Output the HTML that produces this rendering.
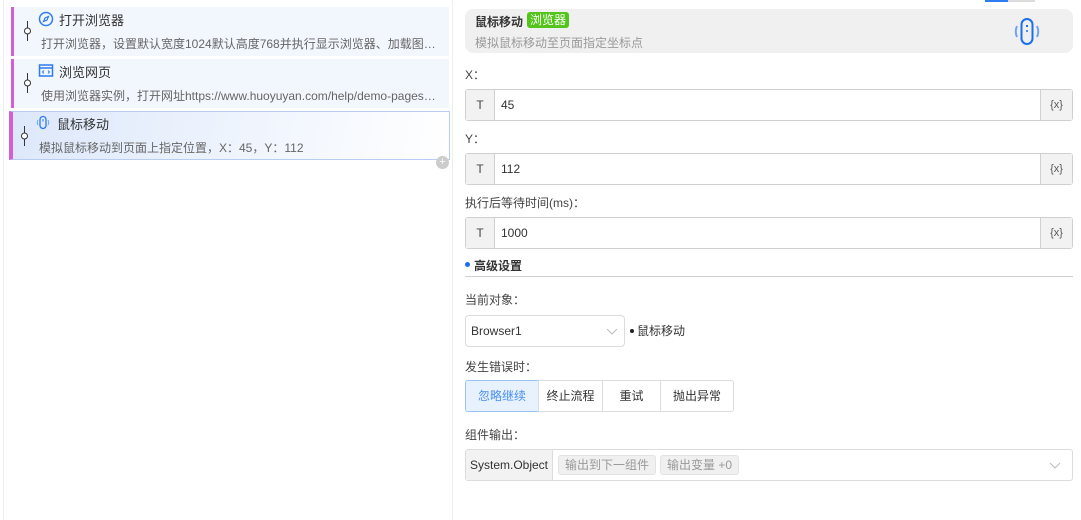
<!DOCTYPE html>
<html><head><meta charset="utf-8"><style>
*{box-sizing:border-box;margin:0;padding:0}
body{width:1081px;height:520px;background:#fff;font-family:"Liberation Sans","Noto Sans CJK SC",sans-serif;position:relative;overflow:hidden;font-size:12px;color:#333}
.a{position:absolute}
.card{position:absolute;left:11px;width:438px;height:49px;background:#f2f6fd;border-left:3px solid #d35ed8}
.card .t{position:absolute;left:45px;top:3px;font-size:13px;color:#333}
.card .d{position:absolute;left:27px;top:28px;font-size:12px;color:#666;white-space:nowrap}
.pin{position:absolute;left:9px;top:14px;width:9px;height:20px}
.ic{position:absolute;left:24px;top:4px;width:16px;height:16px}
.lbl{position:absolute;left:465px;font-size:12px;color:#444}
.inp{position:absolute;left:465px;width:608px;height:32px;border:1px solid #d0d0d0;border-radius:3px;background:#fff}
.inp .T{position:absolute;left:0;top:0;width:29px;height:30px;background:#f2f2f2;border-right:1px solid #d0d0d0;text-align:center;line-height:30px;color:#444}
.inp .v{position:absolute;left:35px;top:0;line-height:30px;color:#333}
.inp .x{position:absolute;right:0;top:0;width:32px;height:30px;background:#f2f2f2;border-left:1px solid #d0d0d0;text-align:center;line-height:30px;color:#555;font-size:11px}
.btn{position:absolute;top:380px;height:32px;border:1px solid #dcdcdc;text-align:center;line-height:30px;font-size:12px;color:#333;background:#fff}
</style></head><body>
<div class="a" style="left:3px;top:0;width:1px;height:520px;background:#eee"></div>
<div class="a" style="left:452px;top:0;width:1px;height:520px;background:#eee"></div>

<div class="card" style="top:7px">
<svg class="pin" viewBox="0 0 9 20"><line x1="4.5" y1="0" x2="4.5" y2="20" stroke="#333"/><circle cx="4.5" cy="10" r="3" fill="#fff" stroke="#333"/></svg>
<svg class="ic" viewBox="0 0 16 16"><circle cx="8" cy="8" r="6.5" fill="none" stroke="#2d7cf2" stroke-width="1.5"/><path d="M10.5 5.5L9 9 5.5 10.5 7 7z" fill="none" stroke="#2d7cf2" stroke-width="1.2"/></svg>
<div class="t">打开浏览器</div><div class="d">打开浏览器，设置默认宽度1024默认高度768并执行显示浏览器、加载图…</div></div>
<div class="card" style="top:59px">
<svg class="pin" viewBox="0 0 9 20"><line x1="4.5" y1="0" x2="4.5" y2="20" stroke="#333"/><circle cx="4.5" cy="10" r="3" fill="#fff" stroke="#333"/></svg>
<svg class="ic" viewBox="0 0 16 16"><rect x="1.5" y="2" width="13" height="11" fill="none" stroke="#2d7cf2" stroke-width="1.5"/><line x1="1.5" y1="5" x2="14.5" y2="5" stroke="#2d7cf2" stroke-width="1.5"/><path d="M6 7.5l-1.5 1.5 1.5 1.5M10 7.5l1.5 1.5-1.5 1.5" fill="none" stroke="#2d7cf2"/></svg>
<div class="t">浏览网页</div><div class="d">使用浏览器实例，打开网址https://www.huoyuyan.com/help/demo-pages…</div></div>
<div class="card" style="top:111px;left:9px;width:441px;background:linear-gradient(100deg,#dde8fb,#fff);border:1px solid #b7cdf3;border-left:4px solid #d35ed8">
<svg class="pin" viewBox="0 0 9 20" style="left:7px"><line x1="4.5" y1="0" x2="4.5" y2="20" stroke="#333"/><circle cx="4.5" cy="10" r="3" fill="#fff" stroke="#333"/></svg>
<svg class="ic" viewBox="0 0 16 16" style="left:22px;top:3px"><rect x="5" y="1.5" width="6" height="12" rx="3" fill="none" stroke="#2d7cf2" stroke-width="1.3"/><line x1="8" y1="4" x2="8" y2="6.5" stroke="#2d7cf2"/><path d="M3 5Q1.5 7.5 3 10M13 5Q14.5 7.5 13 10" fill="none" stroke="#6fa3f5"/></svg>
<div class="t" style="left:44px;top:2px">鼠标移动</div><div class="d" style="left:26px;top:27px">模拟鼠标移动到页面上指定位置，X：45，Y：112</div></div>
<div class="a" style="left:436px;top:156px;width:13px;height:13px;border-radius:50%;background:#ccc;color:#fff;font-size:11px;line-height:13px;text-align:center">+</div>

<div class="a" style="left:985px;top:0;width:23px;height:2px;background:#2d7cf2"></div>
<div class="a" style="left:1008px;top:0;width:27px;height:2px;background:#ddd"></div>
<div class="a" style="left:465px;top:9px;width:608px;height:44px;background:#f0f0f0;border-radius:8px">
<div class="a" style="left:10px;top:4px;font-size:12px;font-weight:bold;color:#333">鼠标移动</div>
<div class="a" style="left:62px;top:3px;height:16px;padding:0 3px;background:#52c41a;color:#fff;border-radius:3px;font-size:12px;line-height:16px">浏览器</div>
<div class="a" style="left:10px;top:25px;font-size:12px;color:#999">模拟鼠标移动至页面指定坐标点</div>
<svg class="a" style="left:548px;top:8px" width="28" height="32" viewBox="0 0 28 32"><rect x="8.5" y="2" width="11" height="25" rx="5.5" fill="none" stroke="#1a6ff0" stroke-width="2"/><line x1="14" y1="8" x2="14" y2="10" stroke="#1a6ff0" stroke-width="2"/><circle cx="14" cy="14" r="1" fill="#1a6ff0"/><path d="M4 9Q1.5 14.5 4 20M24 9Q26.5 14.5 24 20" fill="none" stroke="#6fa3f5" stroke-width="2"/></svg>
</div>

<div class="lbl" style="top:66px">X：</div>
<div class="inp" style="top:89px"><div class="T">T</div><div class="v">45</div><div class="x">{x}</div></div>
<div class="lbl" style="top:130px">Y：</div>
<div class="inp" style="top:153px"><div class="T">T</div><div class="v">112</div><div class="x">{x}</div></div>
<div class="lbl" style="top:194px">执行后等待时间(ms)：</div>
<div class="inp" style="top:217px"><div class="T">T</div><div class="v">1000</div><div class="x">{x}</div></div>

<div class="a" style="left:465px;top:262px;width:5px;height:5px;border-radius:50%;background:#1a6ff0"></div>
<div class="a" style="left:474px;top:257px;font-size:12px;font-weight:bold;color:#333">高级设置</div>
<div class="a" style="left:465px;top:276px;width:608px;height:1px;background:#d0d0d0"></div>
<div class="lbl" style="top:291px">当前对象：</div>
<div class="a" style="left:465px;top:315px;width:160px;height:32px;border:1px solid #dcdcdc;border-radius:4px;background:#fff"><span class="a" style="left:5px;top:8px;color:#333">Browser1</span>
<svg class="a" style="left:140px;top:12px" width="12" height="8"><path d="M1 1l5 5 5-5" fill="none" stroke="#bbb"/></svg></div>
<div class="a" style="left:630px;top:329px;width:4px;height:4px;border-radius:50%;background:#222"></div>
<div class="a" style="left:637px;top:322px;color:#333">鼠标移动</div>
<div class="lbl" style="top:358px">发生错误时：</div>
<div class="btn" style="left:465px;width:74px;background:#e8f2ff;border-color:#9cc3f7;color:#4a8ff0;border-radius:3px 0 0 3px">忽略继续</div>
<div class="btn" style="left:538px;width:65px">终止流程</div>
<div class="btn" style="left:602px;width:59px">重试</div>
<div class="btn" style="left:660px;width:74px;border-radius:0 3px 3px 0">抛出异常</div>
<div class="lbl" style="top:426px">组件输出：</div>
<div class="a" style="left:465px;top:449px;width:608px;height:32px;border:1px solid #dcdcdc;border-radius:3px;background:#fff">
<div class="a" style="left:0;top:0;width:87px;height:30px;background:#f2f2f2;border-right:1px solid #dcdcdc;line-height:30px;text-align:center;color:#333">System.Object</div>
<div class="a" style="left:92px;top:5px;height:20px;padding:0 6px;background:#f0f0f0;border:1px solid #e3e3e3;border-radius:3px;line-height:18px;color:#999">输出到下一组件</div>
<div class="a" style="left:194px;top:5px;height:20px;padding:0 6px;background:#f0f0f0;border:1px solid #e3e3e3;border-radius:3px;line-height:18px;color:#999">输出变量 +0</div>
<svg class="a" style="left:583px;top:12px" width="12" height="8"><path d="M1 1l5 5 5-5" fill="none" stroke="#bbb"/></svg>
</div>
</body></html>
